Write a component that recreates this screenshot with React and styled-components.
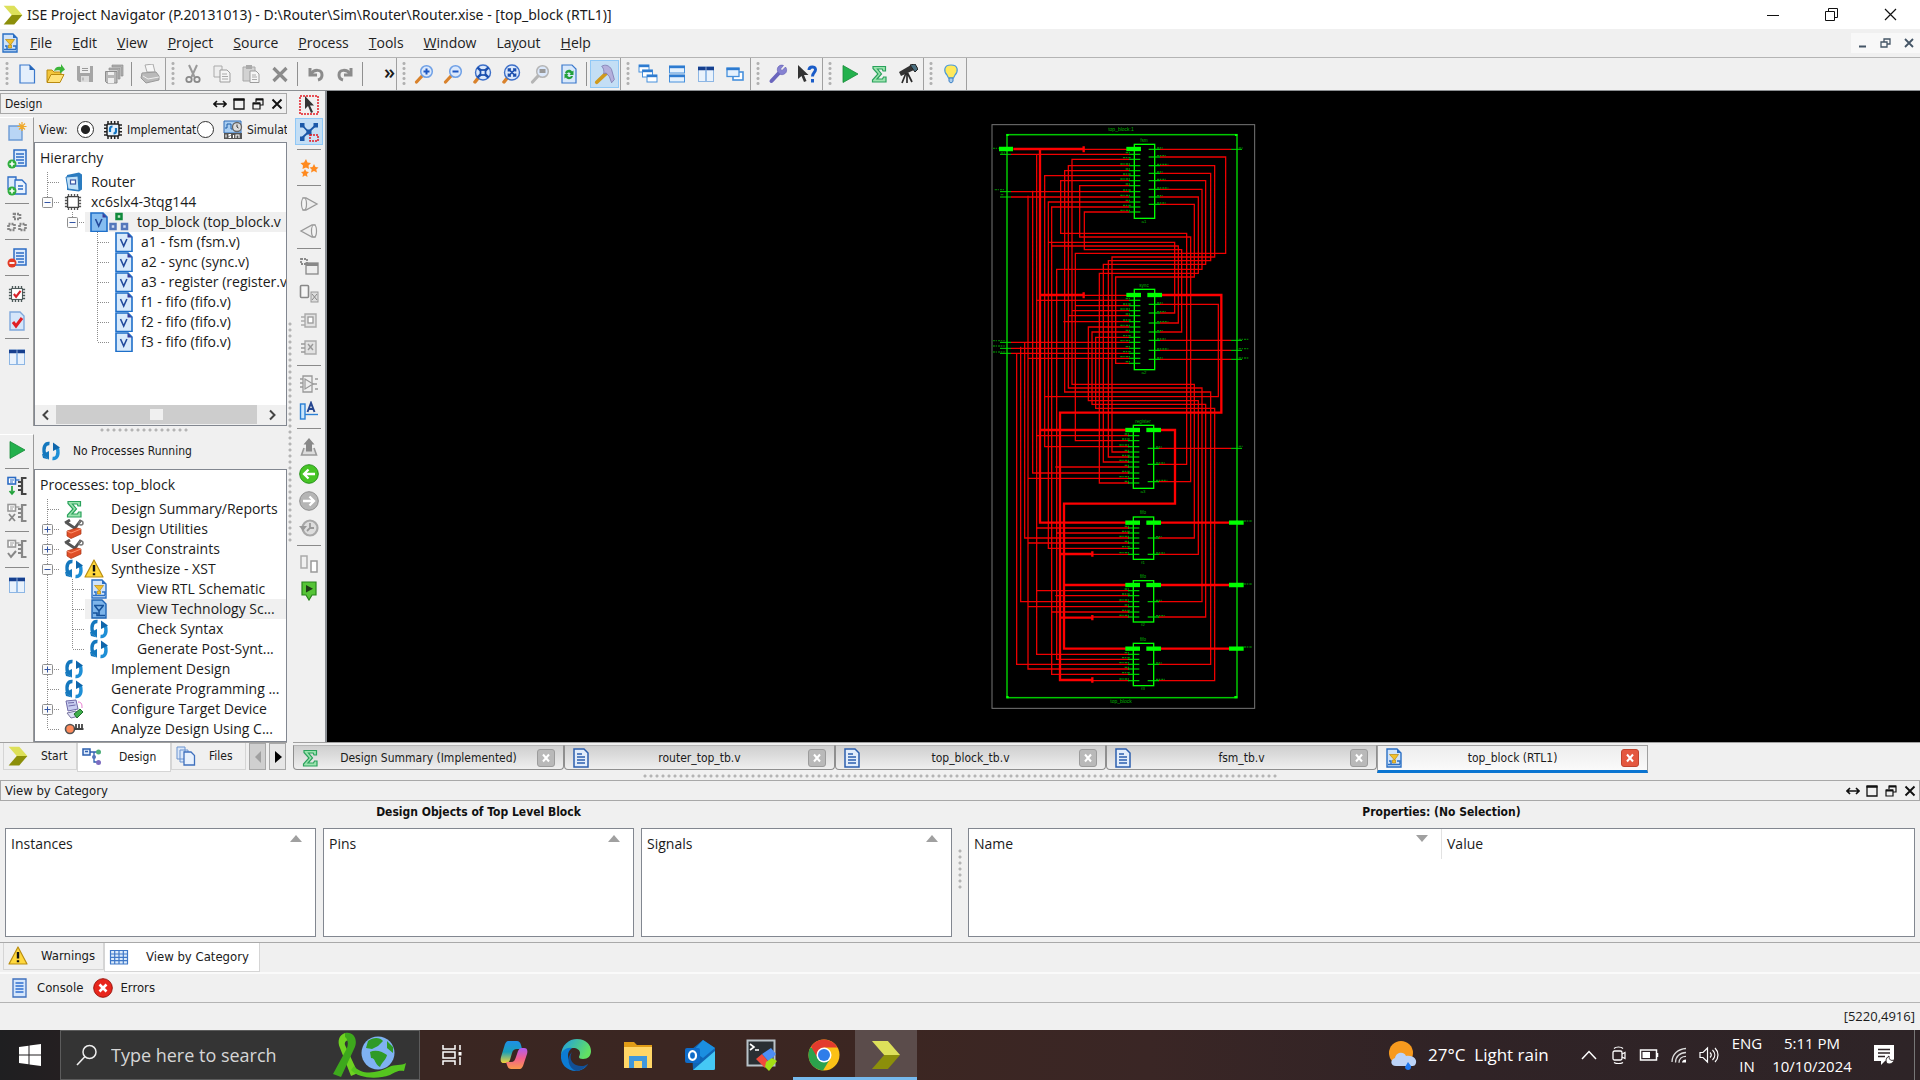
import React from "react";
import styled, { createGlobalStyle, css } from "styled-components";

const UI = `"Open Sans", "Noto Sans", sans-serif`;
const SMALL = `"DejaVu Sans Condensed", "DejaVu Sans", sans-serif`;

const GlobalStyle = createGlobalStyle`
  * { box-sizing: border-box; }
  body { margin: 0; background: #f0f0f0; color: #1b1b1b; font: 14px/20px ${UI}; }
  button { margin: 0; padding: 0; border: 0; background: none; color: inherit; font: inherit; }
  svg { display: block; flex: none; }
`;

/* ---------- icons ---------- */

const Svg = ({ s = 20, w, h, children, vb = "0 0 20 20" }) => (
  <svg width={w || s} height={h || s} viewBox={vb} fill="none" aria-hidden="true">{children}</svg>
);

const sheet = (fill, stroke) => <path d="M3 1h10l4 4v14H3z" fill={fill} stroke={stroke} strokeWidth="1.400" />;
const plus = <g><circle cx="5" cy="15" r="4.500" fill="#2fae3e" /><path d="M5 12.500v5M2.500 15h5" stroke="#fff" strokeWidth="1.600" /></g>;
const lens = (inner, c = "#6fa0e6", handle = "#d9822b") => (
  <g>
    <path d="M2.500 18l6-6.500" stroke={handle} strokeWidth="3.200" strokeLinecap="round" />
    <circle cx="12.500" cy="7.500" r="5.800" fill="#dbe8fb" stroke={c} strokeWidth="1.500" />
    {inner}
  </g>
);
const chipPins = (c) => <path d="M5 1v18M8.300 1v18M11.700 1v18M15 1v18M1 5h18M1 8.300h18M1 11.700h18M1 15h18" stroke={c} strokeWidth="1.500" />;
const expandArrows = (
  <path d="M9 4l7 7M16 4l-7 7M9 6.500V4h2.500M13.500 4H16v2.500M9 8.500V11h2.500M13.500 11H16V8.500" stroke="#1b4fae" strokeWidth="1.700" />
);
const flow = (c, dark) => (
  <g>
    <rect x="1" y="1.500" width="7.500" height="6.500" fill="#fff" stroke={c} strokeWidth="1.600" />
    <path d="M3 4h4M3 6h3" stroke={c} />
    <path d="M8.500 4h4" stroke={c} strokeWidth="1.300" />
    <path d="M19.500 2h-4.500v16h4.500M11 6h4M11 10h4M11 14h4" stroke={dark} strokeWidth="2.200" />
  </g>
);

const ICONS = {
  ise: <Svg vb="0 0 32 32"><path d="M1 1h17l13 15H14z" fill="#dde05a" /><path d="M14 16h17L18 31H1z" fill="#8c8f0a" /></Svg>,
  schem: <Svg>{sheet("#cfe3fb", "#2a6fc4")}<path d="M13 1v4h4" fill="#2a6fc4" /><path d="M5.500 6.500h9l-4 5.500zM8.500 12h3v3h-3z" fill="#f2c12e" stroke="#b98a10" strokeWidth=".7" /><path d="M4 16.500h12M13 13h3v3M5 13h2v3" stroke="#2a6fc4" strokeWidth="1.400" /></Svg>,
  schemSel: <Svg>{sheet("#7db4ea", "#1f64b4")}<path d="M5 6.500h10M6 7l4 5 4-5M4 14h4v2.500h8M10 12v5" stroke="#16529b" strokeWidth="1.600" /></Svg>,
  newf: <Svg><path d="M3 1h9.500l5 5v13H3z" fill="#e4effc" stroke="#3a78cc" strokeWidth="1.200" /><path d="M12.500 1v5h5" fill="#2463b6" /></Svg>,
  open: <Svg><path d="M1 18V6h5l2 2h7v3" fill="#f3c63b" stroke="#b98a10" /><path d="M1 18.500l4-8h13l-4 8z" fill="#ffe27a" stroke="#b98a10" /><path d="M8 7c1-4 4-5 7-4V0l4 5.500-5 4V6.500c-2-.5-4-.5-6 .5z" fill="#3bb53a" /></Svg>,
  save: <Svg><path d="M2 2h16v16H4l-2-2z" fill="#a5a5a5" /><path d="M5 2h10v7H5z" fill="#eee" /><path d="M6 12h8v6H6z" fill="#dcdcdc" /><path d="M7 4.500h6M7 6.500h6M8 13.500v3" stroke="#999" /></Svg>,
  saveall: <Svg><path d="M8 1h11v11h-2V3H8zM5 4h11v11h-2V6H5z" fill="#b0b0b0" stroke="#919191" strokeWidth=".7" /><path d="M1.500 7.500H13V19H3l-1.500-1.500z" fill="#b8b8b8" stroke="#8d8d8d" /><path d="M4 8h6v3H4zM4 14h6v5H4z" fill="#efefef" /></Svg>,
  print: <Svg><path d="M5 1l8-1 2 8H7z" fill="#f6f6f6" stroke="#aaa" /><path d="M2 9l14-1 3 4v4l-13 3-5-5z" fill="#bababa" stroke="#999" /><path d="M3 12l5 3 11-2" stroke="#eee" /></Svg>,
  cut: <Svg><path d="M6 1l5.500 12M14 1L8.500 13" stroke="#9a9a9a" strokeWidth="2" /><circle cx="6" cy="15.500" r="2.700" stroke="#8a8a8a" strokeWidth="1.800" /><circle cx="14" cy="15.500" r="2.700" stroke="#8a8a8a" strokeWidth="1.800" /></Svg>,
  copy: <Svg><path d="M2 2h8v11H2z" fill="#eee" stroke="#aaa" /><path d="M8 6h7l3 3v9H8z" fill="#f5f5f5" stroke="#9d9d9d" /><path d="M10 10h5M10 12.500h6M10 15h6" stroke="#aaa" /></Svg>,
  paste: <Svg><path d="M2 3h12v14H2z" fill="#d2d2d2" stroke="#a8a8a8" /><path d="M5 1h6v4H5z" fill="#aaa" /><path d="M9 7h6l3 3v8.500H9z" fill="#f5f5f5" stroke="#9d9d9d" /><path d="M11 11h4M11 13h5M11 15.500h5" stroke="#aaa" /></Svg>,
  del: <Svg><path d="M3.500 4l13 13M16.500 4l-13 13" stroke="#8b8b8b" strokeWidth="3.200" /></Svg>,
  undo: <Svg><path d="M4 4v7h7" stroke="#8b8b8b" strokeWidth="3" /><path d="M5 10c3-5 11-5 11 1 0 3-2 4.500-4 5" stroke="#8b8b8b" strokeWidth="3" /></Svg>,
  redo: <Svg><path d="M16 4v7H9" stroke="#8b8b8b" strokeWidth="3" /><path d="M15 10C12 5 4 5 4 11c0 3 2 4.500 4 5" stroke="#8b8b8b" strokeWidth="3" /></Svg>,
  zin: <Svg>{lens(<path d="M12.500 4.500v6M9.500 7.500h6" stroke="#1c57c2" strokeWidth="2" />)}</Svg>,
  zout: <Svg>{lens(<path d="M9.500 7.500h6" stroke="#1c57c2" strokeWidth="2" />)}</Svg>,
  zfit: <Svg><path d="M3 18l4-5" stroke="#d9822b" strokeWidth="3.500" strokeLinecap="round" /><circle cx="11" cy="8.500" r="7.500" fill="#dbe8fb" stroke="#3d6fc8" strokeWidth="1.400" /><path d="M5.500 3.500l11 10M16.500 3.500l-11 10" stroke="#1b4fae" strokeWidth="2.400" /><rect x="8.500" y="6" width="5" height="5" fill="#dbe8fb" stroke="#1b4fae" strokeWidth="1.700" /></Svg>,
  zbox: <Svg><path d="M3 18l4-5" stroke="#d9822b" strokeWidth="3.500" strokeLinecap="round" /><circle cx="11" cy="8.500" r="7.500" fill="#dbe8fb" stroke="#3d6fc8" strokeWidth="1.400" /><g transform="translate(-1.500 1)">{expandArrows}</g></Svg>,
  zsel: <Svg>{lens(<path d="M9.500 5h6v4h-6z" fill="#999" />, "#b5b5b5", "#b5b5b5")}</Svg>,
  refresh: <Svg><path d="M3 1h10l4 4v14H3z" fill="#d8e8fb" stroke="#3a78cc" strokeWidth="1.200" /><path d="M6 9c1-4 6-4 7-1.500l1.500-1V11h-4l1.200-1.300C10.500 8 8.500 8 8 10zM14 12c-1 4-6 4-7 1.500l-1.500 1V10h4l-1.200 1.800c1 1.500 3 1.500 3.700.2z" fill="#22a03a" /></Svg>,
  hammer: <Svg s={22} vb="0 0 20 20"><path d="M2.500 17.500l9-8.500" stroke="#d09a1d" strokeWidth="3.400" strokeLinecap="round" /><path d="M7 3c3-2 7-1 9 3l2.500 9-2.500 3-2-5.500-3-3.500-2 1c0-3 0-5-2-7z" fill="#b4b0dc" stroke="#7b77ad" strokeWidth=".7" /></Svg>,
  cascade: <Svg>{[[1, 1], [4.5, 6], [9, 11]].map(([x, y]) => <g key={x}><rect x={x} y={y} width="10" height="7" fill="#fff" stroke="#4690dc" /><path d={`M${x} ${y + 1}h10`} stroke="#2e7bd0" strokeWidth="2.400" /></g>)}</Svg>,
  tileh: <Svg>{[2, 11].map((y) => <g key={y}><rect x="2.500" y={y} width="15" height="7" fill="#e5f1fd" stroke="#4690dc" /><path d={`M2 ${y + 1}h16`} stroke="#2e7bd0" strokeWidth="2.400" /></g>)}</Svg>,
  tilev: <Svg><rect x="2.500" y="3" width="15" height="14.500" fill="#e9f2fc" stroke="#8db6e4" /><path d="M2 4.500h7.700M10.300 4.500H18" stroke="#163f8e" strokeWidth="3.600" /><path d="M10 6v11" stroke="#7aaae0" strokeWidth="1.500" /></Svg>,
  windows: <Svg><rect x="8" y="8" width="10" height="8" fill="#fff" stroke="#4690dc" strokeWidth="1.600" /><rect x="2" y="4" width="12" height="8.500" fill="#e5f1fd" stroke="#4690dc" strokeWidth="1.300" /><path d="M1.500 5h13" stroke="#2e7bd0" strokeWidth="2.400" /></Svg>,
  wrench: <Svg><path d="M3.500 17l7-7.500" stroke="#6b66bd" strokeWidth="4" strokeLinecap="round" /><path d="M17.500 3l-3.500 3.500-1.500-1.500L15.500 1.500C12 0 8.500 3 9.500 7s6 5 8.500 1.500c1-2 .8-4-.5-5.500z" fill="#8682d2" stroke="#5e5ab0" strokeWidth=".6" /></Svg>,
  help: <Svg><path d="M1 1v14l3.500-3 2.500 6 2.500-1-2.500-6h4.500z" fill="#333" /><path d="M12 6c0-4 6.500-4 6.500-.5 0 3-3 3-3 7M15.500 15v3.500" stroke="#1a5cc8" strokeWidth="3" /></Svg>,
  run: <Svg><path d="M3 1.500L18 10 3 18.500z" fill="#23b14d" stroke="#178a38" strokeWidth=".8" /></Svg>,
  sigma: <Svg><path d="M4 2.500h12.500V7H14l-.8-2H8.500l4 5-4.500 5h5.500l1-2H17v5H3.500v-2L9 10 4 4.500z" fill="#9be3ae" stroke="#2aa25c" strokeWidth="1.200" /></Svg>,
  scope: <Svg><path d="M1 8l12-7 3 5L3 12z" fill="#333" /><path d="M12 1l5-1 3 5-3 3z" fill="#4a6f80" stroke="#222" /><path d="M8 9L4 19M9 9v10M9.500 9l4.500 9" stroke="#2b2b2b" strokeWidth="1.700" /></Svg>,
  bulb: <Svg><path d="M10 1c-8 0-7 7-4 10l1.500 3h5L14 11c3-3 4-10-4-10z" fill="#ffe95c" stroke="#4b9ad8" strokeWidth="1.200" /><path d="M8 14h4v3.500L10 19l-2-1.500z" fill="#a9cdee" stroke="#3a7fc4" /></Svg>,
  newsrc: <Svg><path d="M2 4h13v14H2z" fill="#b9d5f5" stroke="#6c9ad4" strokeWidth="1.400" /><path d="M15 0v9M10.500 4.500h9M12 1.500l6 6M18 1.500l-6 6" stroke="#f0a92a" strokeWidth="1.200" /></Svg>,
  addsrc: <Svg><path d="M7 1h12v16H7z" fill="#dcebfc" stroke="#2c6cc4" strokeWidth="1.500" /><path d="M9 5h8M9 8h8M9 11h8M11 14h6" stroke="#2c6cc4" strokeWidth="1.300" />{plus}</Svg>,
  addcopy: <Svg><path d="M1 1h8v12H1z" fill="#dcebfc" stroke="#2c6cc4" strokeWidth="1.300" /><path d="M8 4h7l4 4v10H8z" fill="#eaf3fe" stroke="#2c6cc4" strokeWidth="1.300" /><path d="M11 10h5M11 13h5" stroke="#2c6cc4" strokeWidth="1.500" />{plus}</Svg>,
  hier: <Svg><g stroke="#858585" strokeWidth="2.600" strokeDasharray="2 1"><rect x="7" y="2" width="6" height="5" /><rect x="1.500" y="12" width="6" height="6" /><rect x="12.500" y="12" width="6" height="6" /></g></Svg>,
  remove: <Svg><path d="M7 1h12v16H7z" fill="#dcebfc" stroke="#2c6cc4" strokeWidth="1.500" /><path d="M9 5h8M9 8h8M9 11h8M11 14h6" stroke="#2c6cc4" strokeWidth="1.300" /><circle cx="5" cy="15" r="4.500" fill="#e23a25" /><path d="M2.500 15h5" stroke="#fff" strokeWidth="1.800" /></Svg>,
  chipcheck: <Svg s={18}>{chipPins("#4d5a5a")}<rect x="4" y="4" width="12" height="12" fill="#fff" stroke="#3d4a4a" /><path d="M6.500 10l2.500 3 5-6.500" stroke="#d8232a" strokeWidth="2.400" /></Svg>,
  filecheck: <Svg>{sheet("#d5e6fa", "#7fa8dc")}<path d="M6 11l3 4 6-8" stroke="#e01f26" strokeWidth="3" /></Svg>,
  flowblue: <Svg>{flow("#2c6cc4", "#444")}<path d="M5 10v8M2.500 15L5 18l2.500-3" stroke="#23a33c" strokeWidth="1.700" /></Svg>,
  flowx: <Svg>{flow("#999", "#888")}<path d="M2 11l6 7M8 11l-6 7" stroke="#888" strokeWidth="1.800" /></Svg>,
  flowchk: <Svg>{flow("#999", "#888")}<path d="M1 14l3 4 5-6" stroke="#888" strokeWidth="2" /></Svg>,
  folder: <Svg><path d="M3 3l12-2.500 3 2v15l-3 2L3 18z" fill="#2b7cc0" /><path d="M2 5l12-1 1 14.500L4 17z" fill="#bfe0f8" stroke="#2a78bd" /><rect x="6.500" y="8" width="5" height="4" fill="#fff" stroke="#3a56a5" strokeWidth="1.200" /></Svg>,
  chip: <Svg s={18}>{chipPins("#555")}<path d="M4 4h12v12H4z" fill="#fff" stroke="#444" strokeWidth="1.400" /></Svg>,
  chipblue: <Svg>{chipPins("#222")}<rect x="4" y="4" width="12" height="12" rx="1.500" fill="#e3f1fc" stroke="#222" strokeWidth="1.500" /><path d="M7 12V9c0-2 1-2.500 2.500-2.500M13 8v3c0 2-1 2.500-2.500 2.500" stroke="#1477c4" strokeWidth="2.200" /></Svg>,
  isim: <Svg><path d="M1 1h17v12H1z" fill="#a8cdf1" stroke="#2f6db8" /><path d="M2 8h2V4h4v5h3" stroke="#1f5ea8" /><circle cx="14" cy="7" r="4.500" fill="#ddd" stroke="#666" strokeWidth="1.300" /><path d="M14 4.500V7l1.500 1" stroke="#333" /><path d="M1 13h18v6H1z" fill="#555" /><path d="M3 14.500v3M5.500 17.500h2v-1.500h-1.500v-1.500h2M10.500 15v3M13 18v-3h3v3" stroke="#fff" strokeWidth="1.100" /></Svg>,
  vfile: <Svg><path d="M2 1h12l4 4v14.500H2z" fill="#d9eafb" stroke="#1e6fc9" strokeWidth="1.600" /><path d="M13.500 1v4.500H18" fill="#3a3f9a" /><path d="M6.500 7l3.200 7 3.200-7" stroke="#234a9c" strokeWidth="1.600" /></Svg>,
  vfileSel: <Svg><path d="M2 1h12l4 4v14.500H2z" fill="#86bdf0" stroke="#1e6fc9" strokeWidth="1.600" /><path d="M13.500 1v4.500H18" fill="#3a3f9a" /><path d="M6.500 7l3.200 7 3.200-7" stroke="#234a9c" strokeWidth="1.600" /></Svg>,
  tree3: <Svg><rect x="7.500" y="2" width="5" height="5" fill="#bfe8c7" stroke="#118a3c" strokeWidth="2.500" /><rect x="1.500" y="12" width="5" height="5" fill="#cfdcf5" stroke="#5577bb" strokeWidth="2.500" /><rect x="13" y="12" width="5" height="5" fill="#cfdcf5" stroke="#5577bb" strokeWidth="2.500" /></Svg>,
  cycle: <Svg><path d="M8.500 2.500C4 2 2 6 3.500 13" stroke="#1478be" strokeWidth="3.400" /><path d="M1 13.500l7-3.500v8.500z" fill="#1478be" /><path d="M1 13l7 5.500L2 17z" fill="#1478be" /><path d="M11.500 17.500c4.500.5 6.500-3.500 5-10.500" stroke="#1e8fd6" strokeWidth="3.400" /><path d="M19 6.500L12 10V1.500z" fill="#0f66ab" /></Svg>,
  tools: <Svg><path d="M3 4l9 6M1 4l5-3M17 1l-6 8" stroke="#555" strokeWidth="2.800" /><circle cx="17" cy="4" r="2" stroke="#777" strokeWidth="1.500" /><path d="M3 12l10-3 4 1v5L7 19.500 3 17z" fill="#df4f28" stroke="#a73516" strokeWidth=".7" /><path d="M3 12l4 2 10-4" stroke="#ff9470" /></Svg>,
  warn: <Svg><path d="M10 1l9 17H1z" fill="#ffd83d" stroke="#b98d10" strokeWidth="1.200" strokeLinejoin="round" /><path d="M10 6v6.500M10 14.300v2" stroke="#111" strokeWidth="2.400" /></Svg>,
  device: <Svg><path d="M2 2l10-1 2 9-10 2z" fill="#c8cdf0" stroke="#6f6aa8" /><path d="M4 4l6-.5M4.500 7l7-1" stroke="#6f6aa8" /><path d="M3 14l9-2 3 5-8 2z" fill="#dcdff4" stroke="#77739f" /><path d="M10 15l6-5 3 3-6 6z" fill="#3fae4b" stroke="#1f6e2c" /><path d="M14 3c4 0 4 3 4 6" stroke="#e87ad0" /></Svg>,
  analyze: <Svg><circle cx="6" cy="10" r="4.500" fill="#ff8a5a" stroke="#555" strokeWidth="1.600" /><path d="M10 10h9.500M12 5v5M15 5v5M18 5v5" stroke="#444" strokeWidth="1.800" /></Svg>,
  pointer: <Svg><rect x="1" y="1" width="18" height="18" stroke="#e31b23" strokeWidth="1.500" strokeDasharray="2 1" /><path d="M6 1v13l3-3 3 7 2-1-3-6.500h4z" fill="#333" /></Svg>,
  pan: <Svg><path d="M3 3l11 12M17 3L3 16" stroke="#1b58a8" strokeWidth="1.800" /><path d="M1 1h4.500v4.500H1zM14.500 1H19v4.500h-4.500zM1 14.500h4.500V19H1zM7.500 7.500h5v5h-5z" fill="#1b58a8" /><rect x="11" y="13" width="8" height="6" fill="#cde3f6" stroke="#e31b23" strokeWidth="1.500" strokeDasharray="2 1" /></Svg>,
  stars: <Svg><path d="M7 1l1.500 3.500L12 5 9.500 7.500l.5 3.500-3-1.500L3.500 11l.5-3.500L1.500 5 5 4.500zM15 6l1.500 3 3 .5-2.200 2 .7 3-3-1.500-3 1.500.7-3-2.200-2 3-.5zM6 11l1.300 2.500 2.700.5-2 2 .5 3L6 17.500 3.500 19l.5-3-2-2 2.700-.5z" fill="#ff8a1f" /></Svg>,
  coneR: <Svg><path d="M4 4h3l11 6-11 6H4z" fill="#eee" stroke="#999" strokeWidth="1.300" /><ellipse cx="5" cy="10" rx="2.500" ry="6" fill="#f4f4f4" stroke="#999" strokeWidth="1.200" /></Svg>,
  coneL: <Svg><path d="M16 4h-3L2 10l11 6h3z" fill="#eee" stroke="#999" strokeWidth="1.300" /><ellipse cx="15" cy="10" rx="2.500" ry="6" fill="#f4f4f4" stroke="#999" strokeWidth="1.200" /></Svg>,
  push: <Svg><rect x="7" y="6" width="12" height="11" fill="#eee" stroke="#888" strokeWidth="1.300" /><path d="M7 7.500h12" stroke="#888" strokeWidth="3" /><rect x="2" y="2" width="6" height="5" stroke="#888" strokeWidth="1.800" strokeDasharray="2 1" /></Svg>,
  pop: <Svg><rect x="1.500" y="1.500" width="8" height="12" rx="1" fill="#f5f5f5" stroke="#888" strokeWidth="1.600" /><rect x="12" y="8" width="7" height="10" fill="#ddd" stroke="#999" /><path d="M13 10l5 6M18 10l-5 6" stroke="#888" /></Svg>,
  mod1: <Svg><path d="M6 3h11v13H6z" fill="#e2e2e2" stroke="#aaa" strokeWidth="1.400" /><path d="M2 6h4M2 10h4M2 14h4" stroke="#aaa" strokeWidth="1.500" /><rect x="9" y="6" width="5" height="6" fill="#fff" stroke="#999" strokeWidth="1.300" /></Svg>,
  modx: <Svg><path d="M6 3h11v13H6z" fill="#e2e2e2" stroke="#aaa" strokeWidth="1.400" /><path d="M2 6h4M2 10h4M2 14h4M9 6l5 6M14 6l-5 6" stroke="#999" strokeWidth="1.400" /></Svg>,
  modtri: <Svg><path d="M4 2h9v16H4zM1 5h3M1 9h3M1 13h3M13 10h5M16 5h3M16 15h3" stroke="#999" strokeWidth="1.300" /><path d="M6 5l8 5-8 5z" fill="#eee" stroke="#999" strokeWidth="1.200" /></Svg>,
  label: <Svg><rect x="1.500" y="3" width="4.500" height="15" fill="#cbe6fb" stroke="#2a7fd4" strokeWidth="1.400" /><path d="M6 13.500h13" stroke="#2a7fd4" strokeWidth="1.400" /><path d="M8.500 11l3.500-9 3.500 9M10 8h4" stroke="#26468f" strokeWidth="2" /></Svg>,
  up: <Svg><path d="M5 11l-2.500 7h15L15 11" fill="#ddd" stroke="#999" strokeWidth="1.600" /><path d="M10 1l5.500 6.500H13v7H7v-7H4.500z" fill="#888" /></Svg>,
  back: <Svg><circle cx="10" cy="10" r="9.300" fill="#46c425" stroke="#26931a" /><path d="M16 10H5M9.500 5.500L5 10l4.500 4.500" stroke="#fff" strokeWidth="2.300" /></Svg>,
  fwd: <Svg><circle cx="10" cy="10" r="9.300" fill="#b5b5b5" stroke="#8d8d8d" /><path d="M4 10h11M10.500 5.500L15 10l-4.500 4.500" stroke="#fff" strokeWidth="2.300" /></Svg>,
  hist: <Svg><circle cx="11" cy="10" r="7.500" fill="#ddd" stroke="#a8a8a8" strokeWidth="2.200" /><path d="M0 8l4 5 4-5z" fill="#999" /><path d="M11 5v5l-3 3M11 10h4" stroke="#999" strokeWidth="1.800" /></Svg>,
  twobox: <Svg><rect x="2" y="2" width="6" height="12" fill="#f0f0f0" stroke="#aaa" strokeWidth="1.500" /><rect x="12" y="7" width="6" height="11" fill="#fff" stroke="#999" strokeWidth="1.500" /></Svg>,
  pin: <Svg><path d="M3 1h14v13h-4l-3 5-3-5H3z" fill="#55c436" stroke="#27841a" strokeWidth="1.200" /><path d="M7 4l7 3.800L7 11.500z" fill="#1d3a16" /></Svg>,
  design: <Svg><rect x="1" y="2" width="7" height="6" fill="#dce8fa" stroke="#2c5fae" strokeWidth="1.500" /><path d="M8 5h4v10h4M12 5h3M3 4.500h3" stroke="#2c5fae" strokeWidth="1.300" /><circle cx="16.500" cy="5" r="2.500" fill="#4fae7a" /><circle cx="12" cy="10" r="2" fill="#5577bb" /><circle cx="16.500" cy="15.500" r="2.500" fill="#7d6cc0" /></Svg>,
  files: <Svg><path d="M1 1h8v12H1zM4 4h8v12H4z" fill="#dbe8fa" stroke="#6b93cf" /><path d="M8 6h7l3.500 3.500V19H8z" fill="#e8f1fd" stroke="#3f70bd" strokeWidth="1.300" /></Svg>,
  doc: <Svg><path d="M3 1h10l4 4v14H3z" fill="#e2edfb" stroke="#2c5fae" strokeWidth="1.500" /><path d="M6 6h5M6 9h8M6 12h8M6 15h8" stroke="#2c5fae" strokeWidth="1.500" /></Svg>,
  grid: <Svg><path d="M1.500 3.500h17v13.500h-17z" fill="#dcebfb" /><path d="M1 3.500h18M1 7h18M1 10.300h18M1 13.600h18M1 17h18M1.500 3v14M5.700 3v14M10 3v14M14.300 3v14M18.500 3v14" stroke="#3f78c8" strokeWidth="1.200" /></Svg>,
  console: <Svg><path d="M3 1h13v18H3z" fill="#d5e6fb" stroke="#3f70bd" strokeWidth="1.300" /><path d="M5.500 5h8M5.500 8h8M5.500 11h8M5.500 14h8" stroke="#2f6fd0" strokeWidth="1.700" /></Svg>,
  error: <Svg><circle cx="10" cy="10" r="9.300" fill="#e8261c" stroke="#9c1710" /><path d="M6.500 6.500l7 7M13.500 6.500l-7 7" stroke="#fff" strokeWidth="2.600" /></Svg>,
};

/* dock caption glyphs */
const CAPS = {
  float: <Svg s={14} vb="0 0 14 14"><path d="M1 7h12M4 4L1 7l3 3M10 4l3 3-3 3" stroke="#111" strokeWidth="1.600" /></Svg>,
  max: <Svg s={14} vb="0 0 14 14"><path d="M2 2.500h10v9.500H2z" stroke="#111" strokeWidth="1.300" /><path d="M1.500 2.500h11" stroke="#111" strokeWidth="2.400" /></Svg>,
  restore: <Svg s={14} vb="0 0 14 14"><path d="M5 5V2h7v6H9M2 6h7v6H2z" stroke="#111" strokeWidth="1.200" /><path d="M5 2.500h7M2 6.500h7" stroke="#111" strokeWidth="2" /></Svg>,
  close: <Svg s={14} vb="0 0 14 14"><path d="M2.500 2.500l9 9M11.500 2.500l-9 9" stroke="#111" strokeWidth="1.900" /></Svg>,
};

/* ---------- frame ---------- */

const Frame = styled.div`display: flex; flex-direction: column; min-height: 100vh; overflow: hidden;`;
const TitleBar = styled.header`
  display: flex; align-items: center; height: 29px; padding-left: 3px; gap: 4px; background: #fff;
  font-family: "Noto Sans", sans-serif;
`;
const Spacer = styled.div`flex: 1;`;
const WinButtons = styled.div`display: flex;`;
const WinButton = styled.button`display: grid; place-items: center; width: 59px; height: 29px;`;
const MenuBar = styled.nav`display: flex; align-items: center; height: 28px; padding-right: 0;`;
const MenuButton = styled.button`
  padding: 0 10px; height: 26px; color: #222;
  &::first-letter { text-decoration: ${(p) => (p.$plain ? "none" : "underline")}; }
`;
const MdiButton = styled.button`display: grid; place-items: center; width: 23px; height: 20px; background: #f8f8f8;`;

const ToolBar = styled.div`
  display: flex; height: 34px; border-top: 1px solid #b4b4b4; border-bottom: 1px solid #8c8f92;
`;
const ToolGroup = styled.div`
  display: flex; align-items: center; padding: 0 1px 0 5px;
  border-right: 1px solid #a0a0a0;
`;
const Grip = styled.span`
  width: 4px; height: 26px; margin-right: 3px;
  background: radial-gradient(circle, #b0b0b0 1px, transparent 2px) 0 0 / 4px 5px;
`;
const Tool = styled.button`
  display: grid; place-items: center; width: 28px; height: 28px; border: 1px solid transparent;
  ${(p) => p.$on && css`background: #c3def5; border-color: #90c8f6;`}
`;
const TopTool = styled(Tool)`width: 29px;`;
const VRule = styled.span`width: 1px; height: 24px; margin: 0 3px; background: #909090;`;
const More = styled.span`width: 29px; padding-bottom: 4px; text-align: right; font-size: 20px; font-weight: 600;`;

const Workspace = styled.div`display: flex; flex: 1; min-height: 0;`;
const DockPanel = styled.aside`display: flex; flex-direction: column; width: 287px; min-height: 0;`;
const Caption = styled.div`
  display: flex; align-items: center; height: 21px; margin: ${(p) => p.$m || "0"}; padding-left: 4px;
  border: 1px solid #a8a8a8; font: ${(p) => p.$size}px/18px ${SMALL}; background: #f0f0f0;
`;
const CapButton = styled.button`display: grid; place-items: center; width: 19px; height: 18px;`;
const Dock = styled.section`display: flex; min-height: 0; flex: 1 1 0;`;
const SideBar = styled.div`
  display: flex; flex-direction: column; align-items: center; width: 34px; padding: ${(p) => p.$pad};
  border-right: 1px solid #9a9a9a; border-top: 1px solid #fff;
`;
const SideTool = styled(Tool)`height: 27px;`;
const HRule = styled.span`height: 1px; width: 24px; margin: 4px 0; background: #8a8a8a; flex: none;`;
const DockBody = styled.div`display: flex; flex-direction: column; flex: 1; min-width: 0;`;
const ViewRow = styled.div`
  display: flex; align-items: center; height: 25px; padding-left: 5px; overflow: hidden; white-space: nowrap;
  font: 12px/16px ${SMALL};
`;
const ViewLabel = styled.span`width: 38px; flex: none;`;
const Choice = styled.label`display: flex; align-items: center; gap: 4px; width: ${(p) => p.$w}px; flex: none;`;
const Radio = styled.input`
  appearance: none; flex: none; width: 17px; height: 17px; margin: 0 5px 0 0; border: 1px solid #333; border-radius: 50%; background: #fff;
  &:checked { background: radial-gradient(circle, #222 4px, #fff 5px); }
`;
const TreeBox = styled.div`
  display: flex; flex-direction: column; flex: 1; min-height: 0; overflow: hidden;
  border: 1px solid #828790; background: #fff;
`;
const TreeHead = styled.div`padding: 5px 0 4px 5px;`;
const Row = styled.div`display: flex; align-items: center; height: 20px; white-space: nowrap;`;
const RowBody = styled.div`
  display: flex; align-items: center; flex: 1; height: 20px; min-width: 0;
  background: ${(p) => (p.$sel ? "#f0f0f0" : "transparent")};
`;
const IconSlot = styled.span`display: flex; align-items: center; flex: none; width: ${(p) => p.$w}px; padding-left: 4px;`;
const RowText = styled.span`padding-left: 1px;`;
const ScrollRow = styled.div`display: flex; align-items: center; height: 20px; margin-top: auto; background: #f0f0f0;`;
const ScrollArrow = styled.button`display: grid; place-items: center; width: ${(p) => p.$w}px; height: 19px;`;
const Track = styled.div`display: grid; place-items: center; flex: 1; height: 19px; background: #cdcdcd;`;
const Thumb = styled.span`width: 13px; height: 11px; background: #f0f0f0;`;
const DotsH = styled.div`
  height: 8px; width: ${(p) => p.$w}; margin: 0 auto; flex: none;
  background: radial-gradient(circle, #b4b4b4 1px, transparent 2px) 0 1px / 6px 6px repeat-x;
`;
const DotsV = styled.div`
  width: ${(p) => p.$w}; display: grid; place-items: center; flex: none;
  &::before { content: ""; width: 4px; height: ${(p) => p.$h}; background: radial-gradient(circle, #b4b4b4 1px, transparent 2px) 0 0 / 4px 6px; }
`;
const Running = styled.div`
  display: flex; align-items: center; gap: 12px; height: 35px; padding-left: 7px; font: 12px/16px ${SMALL};
`;

const DockTabs = styled.div`
  display: flex; align-items: flex-start; height: 30px; padding-left: 3px; border-top: 1px solid #a0a0a0;
  font: 12px/16px ${SMALL};
`;
const DockTab = styled.button`
  display: flex; align-items: center; gap: ${(p) => (p.$on ? 17 : 13)}px; width: ${(p) => p.$w}px; height: ${(p) => (p.$on ? 29 : 27)}px;
  padding: 0 0 0 4px; white-space: nowrap;
  border: 1px solid #d5d5d5; border-top: 0; background: ${(p) => (p.$on ? "#fff" : "#f0f0f0")};
`;
const TabArrow = styled.button`
  display: grid; place-items: center; width: 17px; height: 27px; margin-left: 3px; border: 1px solid #a8a8a8;
  background: ${(p) => (p.$off ? "#cfcfcf" : "#e6e6e6")};
`;

const ToolColumn = styled.div`
  display: flex; flex-direction: column; align-items: center; width: 34px;
  border-right: 2px solid #8b8f94;
`;
const EditorArea = styled.div`display: flex; flex-direction: column; flex: 1; min-width: 0;`;
const EditorRow = styled.div`display: flex; flex: 1; min-height: 0;`;
const Canvas = styled.main`display: flex; align-items: center; justify-content: center; flex: 1; background: #000;`;

const EditorTabs = styled.div`display: flex; align-items: flex-start; height: 30px; border-top: 1px solid #a0a0a0; padding-top: 2px;`;
const EditorTab = styled.div`
  display: flex; align-items: center; flex: 0 1 271px; height: ${(p) => (p.$on ? 28 : 25)}px; padding: 0 8px 0 6px;
  border: 1px solid #8f8f8f; border-top-color: #b5b5b5; border-radius: 0 0 4px 4px;
  background: linear-gradient(#cfcfcf, #efefef); font: 12px/16px ${SMALL};
  ${(p) => p.$on && css`background: linear-gradient(#ededed, #fafafa); border-radius: 0; border-color: #a0a0a0; border-bottom: 3px solid #0a74d1;`}
`;
const TabName = styled.button`flex: 1; text-align: center; white-space: nowrap;`;
const TabClose = styled.button`
  display: grid; place-items: center; width: 18px; height: 18px; border: 1px solid; border-radius: 3px;
  background: ${(p) => (p.$on ? "#e4583f" : "#b9b9b9")}; border-color: ${(p) => (p.$on ? "#c0442e" : "#9c9c9c")};
`;

const CategoryPanel = styled.section`display: flex; padding: 0 5px;`;
const Half = styled.div`display: flex; flex-direction: column; flex: 1; min-width: 0;`;
const HalfTitle = styled.h2`margin: 0; padding: 3px 0 8px; font: bold 12px/16px ${SMALL}; text-align: center; color: #111;`;
const Lists = styled.div`display: flex; gap: 7px;`;
const ListTable = styled.table`
  display: block; flex: 1; height: 109px; border: 1px solid #828790; background: #fff;
  thead, tr { display: flex; width: 100%; }
`;
const HeadCell = styled.th`
  display: flex; flex: 1; justify-content: space-between; padding: 5px 13px 0 5px; height: 30px; font-weight: normal; text-align: left;
  & + & { border-left: 1px solid #e2e2e2; }
`;
const BottomTabs = styled.div`
  display: flex; align-items: flex-start; height: 30px; margin-top: 5px; padding-left: 3px;
  border-top: 1px solid #a9a9a9; font: 13px/16px ${SMALL};
`;
const ConsoleBar = styled.div`
  display: flex; align-items: center; gap: 10px; height: 31px; padding-left: 10px;
  border-top: 2px solid #fafafa; border-bottom: 1px solid #b4b4b4;
`;
const ConsoleTab = styled.button`display: flex; align-items: center; gap: 7px; font: 13px/16px ${SMALL};`;
const StatusBar = styled.footer`height: 27px; padding: 3px 5px 0; text-align: right; font-size: 13px;`;

/* ---------- taskbar ---------- */

const TaskBar = styled.div`
  display: flex; height: 50px; color: #fff;
  background: linear-gradient(90deg, #1f1f21 0, #241f21 60px, #3a2622 420px, #3c2622 900px, #3a2625 1150px, #302326 1450px, #2e2427 100%);
`;
const StartButton = styled.button`display: grid; place-items: center; width: 60px; height: 50px;`;
const Search = styled.label`
  display: flex; align-items: center; width: 360px; margin-right: 1px; padding: 0 11px 0 15px; gap: 13px;
  border: 1px solid #5c5c5c; background: #343434;
`;
const SearchInput = styled.input`
  flex: 1; min-width: 0; padding: 0; border: 0; background: none; color: #ddd; font: 18px/24px ${UI};
  &::placeholder { color: #d6d6d6; opacity: 1; }
`;
const AppButton = styled.button`
  display: grid; place-items: center; width: 62px; height: 50px; border-bottom: 3px solid ${(p) => (p.$run ? "#76b9ed" : "transparent")};
  padding-top: 3px; background: ${(p) => (p.$on ? "#5b4c4b" : "none")}; background-clip: padding-box;
`;
const Tray = styled.div`display: flex; align-items: center; font-size: 17px; padding-right: 5px;`;
const Weather = styled.button`display: flex; align-items: center; width: 186px; gap: 10px; white-space: pre; text-align: left;`;
const TrayButton = styled.button`display: grid; place-items: center; width: 30px; height: 50px;`;
const TrayText = styled.button`width: ${(p) => p.$w}px; font-size: 15px; line-height: 23px; text-align: center;`;
const NoticeButton = styled(TrayButton)`width: 50px; padding-left: 10px;`;
const Desktop = styled.button`width: 1px; height: 50px; margin-left: 10px; background: #777;`;

/* ---------- schematic drawing ---------- */

const THIN = [
  "M310 118H447M93 133H447M170 134V1633H447M168 571H447M168 977H447M168 1254H447M168 1442H447",
  "M447 148H276V823H643V1284H535M276 602H447",
  "M447 167H265V834H666V1475H535M265 617H447",
  "M447 182H254V846H692V1663H535M250 635H447",
  "M447 197H194V1010H447M194 860H715V583H540",
  "M447 212H242V370H620V1063H535",
  "M447 227H299V381H632V1115H535",
  "M93 245H447M158 242V1089H447",
  "M93 261H447M144 257V1677H447M144 1105H447M144 1299H447M144 1490H447M144 745H447",
  "M447 276H205V1315H447M205 397H584V609H540",
  "M447 291H215V1693H447M215 1506H447M215 408H595V639H540",
  "M447 306H313V419H605V666H540",
  "M540 118H753M540 141H737V430H286V992H447M286 587H447",
  "M540 167H704V441H396V1026H447",
  "M540 190H692V452H385V1041H447",
  "M540 212H677V463H370V1056H447",
  "M540 238H666V478H230V1648H447M226 1071H447M230 1269H447M226 1457H447",
  "M540 261H655V490H358V1119H447",
  "M540 283H643V501H407V760H447",
  "M447 651H325V872H655V1333H535",
  "M447 666H336V883H677V1521H535",
  "M447 682H347V895H704V1712H535",
  "M93 697H447M134 697V1284H447M93 715H447M122 710V1475H447M93 730H447M110 730V1663H447",
  "M540 691H753M540 721H753M540 748H753M310 556H447M535 1015H753",
  "M337 1333H447M337 1521H447M337 1712H447",
];
const THICK = [
  "M100 117H311M180 117V1238H440M180 555H311M180 960H440",
  "M540 555H724V908H240V1710H337M240 1332H337M240 1523H337",
  "M535 960H585V1181H252V1616H440M252 1425H440",
  "M535 1238H750M535 1425H750M535 1616H750",
];
const BLOCKS = [
  { x: 463, y: 103, h: 222, top: "fsm", name: "a1", bus: [117], busR: [], l: [133, 148, 167, 182, 197, 212, 227, 245, 261, 276, 291, 306], r: [118, 141, 167, 190, 212, 238, 261, 283] },
  { x: 463, y: 538, h: 241, top: "sync", name: "a2", bus: [555], busR: [555], l: [571, 587, 602, 617, 635, 651, 666, 682, 697, 715, 730, 745, 760], r: [583, 609, 639, 666, 691, 721, 748] },
  { x: 460, y: 946, h: 189, top: "register", name: "a3", bus: [960], busR: [960], l: [977, 992, 1010, 1026, 1041, 1056, 1071, 1089, 1105, 1119], r: [1015, 1063, 1115] },
  { x: 460, y: 1221, h: 127, top: "fifo", name: "f1", bus: [1238], busR: [1238], l: [1254, 1269, 1284, 1299, 1315, 1333], r: [1284, 1333] },
  { x: 460, y: 1412, h: 124, top: "fifo", name: "f2", bus: [1425], busR: [1425], l: [1442, 1457, 1475, 1490, 1506, 1521], r: [1475, 1521] },
  { x: 460, y: 1600, h: 127, top: "fifo", name: "f3", bus: [1616], busR: [1616], l: [1633, 1648, 1663, 1677, 1693, 1712], r: [1663, 1712] },
];
const Schematic = () => (
  <svg width="265" height="586" viewBox="33 42 795 1758" fill="none" role="img" aria-label="top_block schematic">
    <rect x="36" y="44" width="788" height="1751" stroke="#777" strokeWidth="3" />
    <path d={THIN.join("")} stroke="#f00000" strokeWidth="3.800" />
    <path d={THICK.join("")} stroke="#f00" strokeWidth="7" />
    <path d="M311 109v18M311 547v18M337 1324v16M337 1515v16M337 1702v16" stroke="#f00" strokeWidth="7" />
    <rect x="81" y="74" width="690" height="1689" stroke="#00c800" strokeWidth="4.500" />
    <path d="M79 72h7v6h-7zM765 72h7v6h-7zM79 1758h7v7h-7zM763 1758h9v7h-9z" fill="#0f0" />
    {BLOCKS.map((b) => (
      <g key={b.name}>
        <rect x={b.x} y={b.y} width="61" height={b.h} stroke="#0f0" strokeWidth="4" />
        {b.l.map((y) => <path key={y} d={`M${b.x - 16} ${y}h34`} stroke="#00dc00" strokeWidth="3.500" />)}
        {b.r.map((y) => <path key={y} d={`M${b.x + 43} ${y}h34`} stroke="#00dc00" strokeWidth="3.500" />)}
        {b.l.map((y, i) => <path key={y} d={`M${b.x - 14 - (i % 3) * 8 - 12} ${y - 5}H${b.x - 11}`} stroke="#008a00" strokeWidth="4" strokeDasharray="7 2 4 3" />)}
        {b.r.map((y, i) => <path key={y} d={`M${b.x + 68} ${y - 4}h${18 + (i % 3) * 8}`} stroke="#008a00" strokeWidth="4" strokeDasharray="6 2 5 3" />)}
        {b.bus.map((y) => <path key={y} d={`M${b.x - 24} ${y}h44`} stroke="#0f0" strokeWidth="13" />)}
        {b.busR.map((y) => <path key={y} d={`M${b.x + 39} ${y}h44`} stroke="#0f0" strokeWidth="13" />)}
        <text x={b.x + 29} y={b.y - 8} textAnchor="middle" fontSize="14" fontFamily="Liberation Sans" fill="#00b400">{b.top}</text>
        <text x={b.x + 29} y={b.y + b.h + 13} textAnchor="middle" fontSize="13" fontFamily="Liberation Sans" fill="#00b400">{b.name}</text>
      </g>
    ))}
    <path d="M57 117h42M747 1238h44M747 1425h44M747 1616h44" stroke="#0f0" strokeWidth="13" />
    <path d="M60 133h33M60 245h33M60 261h33M60 697h33M60 715h33M60 730h33M753 118h33M753 691h33M753 721h33M753 748h33M753 1015h33" stroke="#00dc00" strokeWidth="3" />
    <path d="M38 115h18M62 129h16M44 239h28M62 254h10M38 692h36M38 708h36M38 726h36M776 114h12M776 688h30M776 716h30M776 744h30M776 1009h12M792 1233h24M792 1422h24M792 1611h24" stroke="#007000" strokeWidth="4" strokeDasharray="7 2 4 3" />
    <text x="423" y="64" textAnchor="middle" fontSize="15" fontFamily="Liberation Sans" fill="#00b400">top_block:1</text>
    <text x="423" y="1778" textAnchor="middle" fontSize="15" fontFamily="Liberation Sans" fill="#00b400">top_block</text>
  </svg>
);

/* ---------- tree ---------- */

/* guide kinds: t = tee, l = last, v = pass-through, b = blank, + / - = expander */
const Guide = ({ kind, end }) => {
  const box = kind === "+" || kind === "-";
  const down = kind === "l" || end ? 10 : 20;
  if (kind === "b") return <svg width="25" height="20" />;
  return (
    <svg width="25" height="20" viewBox="0 0 25 20" fill="none">
      <path d={`M12.500 0V${down}`} stroke="#8c8c8c" strokeDasharray="1 1" />
      {kind !== "v" && <path d="M13 10.500h12" stroke="#8c8c8c" strokeDasharray="1 1" />}
      {box && <rect x="7.500" y="5.500" width="10" height="10" rx="1" fill="#fbfbfb" stroke="#8f8f8f" />}
      {box && <path d={kind === "+" ? "M9.500 10.500h6M12.500 7.500v6" : "M9.500 10.500h6"} stroke="#3355a5" />}
    </svg>
  );
};
const HIER = [
  ["t", 30, ["folder"], "Router"],
  ["-", 30, ["chip"], "xc6slx4-3tqg144", false, true],
  ["b-", 51, ["vfileSel", "tree3"], "top_block (top_block.v", true, true],
  ["bbt", 30, ["vfile"], "a1 - fsm (fsm.v)"],
  ["bbt", 30, ["vfile"], "a2 - sync (sync.v)"],
  ["bbt", 30, ["vfile"], "a3 - register (register.v"],
  ["bbt", 30, ["vfile"], "f1 - fifo (fifo.v)"],
  ["bbt", 30, ["vfile"], "f2 - fifo (fifo.v)"],
  ["bbl", 30, ["vfile"], "f3 - fifo (fifo.v)"],
];
const PROC = [
  ["t", 50, ["sigma"], "Design Summary/Reports"],
  ["+", 50, ["tools"], "Design Utilities"],
  ["+", 50, ["tools"], "User Constraints"],
  ["-", 50, ["cycle", "warn"], "Synthesize - XST"],
  ["vt", 51, ["schem"], "View RTL Schematic"],
  ["vt", 51, ["schemSel"], "View Technology Sc...", true],
  ["vt", 51, ["cycle"], "Check Syntax"],
  ["vl", 51, ["cycle"], "Generate Post-Synt..."],
  ["+", 50, ["cycle"], "Implement Design"],
  ["t", 50, ["cycle"], "Generate Programming ..."],
  ["+", 50, ["device"], "Configure Target Device"],
  ["l", 50, ["analyze"], "Analyze Design Using C..."],
];
const Tree = ({ rows }) => rows.map(([g, w, icons, text, sel, end]) => (
  <Row key={text}>
    {[...g].map((k, i) => <Guide key={i} kind={k} end={end} />)}
    <RowBody $sel={sel}>
      <IconSlot $w={w}>{icons.map((n) => <React.Fragment key={n}>{ICONS[n]}</React.Fragment>)}</IconSlot>
      <RowText>{text}</RowText>
    </RowBody>
  </Row>
));

const Tools = ({ as: T, Rule, items, on }) => items.map((n, i) =>
  n === "|" ? <Rule key={i} /> : <T key={i} aria-label={n} $on={n === on}>{ICONS[n]}</T>
);
const CaptionButtons = () => Object.keys(CAPS).map((n) => <CapButton key={n} aria-label={n}>{CAPS[n]}</CapButton>);
const Tri = ({ d, c = "#a0a0a0" }) => (
  <Svg s={12} vb="0 0 12 12"><path d={{ up: "M0 8L6 1l6 7z", down: "M0 1h12L6 8z", left: "M9 0v12L3 6z", right: "M3 0v12l7-6z" }[d]} fill={c} /></Svg>
);

const TOP = [
  ["newf", "open", "save", "saveall", "|", "print"],
  ["cut", "copy", "paste", "del", "|", "undo", "redo", "|", "more"],
  ["zin", "zout", "zfit", "zbox", "zsel", "refresh", "|", "hammer"],
  ["cascade", "tileh", "tilev", "windows"],
  ["wrench", "help"],
  ["run", "sigma", "scope"],
  ["bulb"],
];
const FILES = [["sigma", "Design Summary (Implemented)"], ["doc", "router_top_tb.v"], ["doc", "top_block_tb.v"], ["doc", "fsm_tb.v"], ["schem", "top_block (RTL1)"]];

/* ---------- taskbar drawings ---------- */
const APPS = [
  ["Task view", <Svg s={22} vb="0 0 22 22"><path d="M2 1v4h12V1M2 21v-4h12v4M2 8h12v6H2zM19 1v5M19 13v8" stroke="#fff" strokeWidth="1.500" /><path d="M17.500 8h3v3.500h-3z" fill="#fff" /></Svg>],
  ["Copilot", <Svg s={30} vb="0 0 30 30"><path d="M9 1h9c2 0 3 1 4 4l1 4h-5c-3 0-4 1-5 4l-2 7c-1 2-2 3-4 3H5c-3 0-4-2-3-6L6 4c1-2 2-3 3-3z" fill="url(#cpa)" /><path d="M21 29h-9c-2 0-3-1-4-4l-1-3h5c3 0 4-2 5-5l2-6c1-2 2-3 4-3h2c3 0 4 2 3 6l-4 12c-1 2-2 3-3 3z" fill="url(#cpb)" /><defs><linearGradient id="cpa" x1="0" y1="0" x2="0" y2="1"><stop stopColor="#1e8fe8" /><stop offset=".5" stopColor="#1a9fb8" /><stop offset="1" stopColor="#f2d337" /></linearGradient><linearGradient id="cpb" x1="0" y1="0" x2="0" y2="1"><stop stopColor="#b05cf0" /><stop offset=".5" stopColor="#f25f8e" /><stop offset="1" stopColor="#fb9a4b" /></linearGradient></defs></Svg>],
  ["Edge", <Svg s={32} vb="0 0 32 32"><defs><linearGradient id="ed" x1="0" y1="0" x2="1" y2=".4"><stop stopColor="#1d9be8" /><stop offset="1" stopColor="#62e062" /></linearGradient></defs><path d="M1 17C1 6 9 0 17 0c9 0 14 6 14 12 0 5-3 8-8 8-3 0-4-1-4-2s1-2 1-4c0-3-3-5-7-5-6 0-11 3-12 8z" fill="url(#ed)" /><path d="M1 16c1-5 6-8 11-7-4 3-5 7-3 12 2 6 9 10 15 7 2-1 3-2 4-3-2 4-7 7-12 7C7 32 0 25 1 16z" fill="#0c7bd4" /><path d="M12 13c-3 5-1 11 4 13s9 1 12-1c-3 4-8 7-12 7-8-3-10-14-4-19z" fill="#124f96" /></Svg>],
  ["File Explorer", <Svg w={30} h={28} vb="0 0 30 28"><path d="M1 1h10l3 3h15v23H1z" fill="#e09c17" /><path d="M1 6h28v21H1z" fill="#ffd667" /><path d="M6 27V15h18v12h-5v-7h-8v7z" fill="#3f97dc" /></Svg>],
  ["Outlook", <Svg s={32} vb="0 0 32 32"><path d="M8 10L19 1l12 8v20c0 2-1 2-2 2H9z" fill="#1066b5" /><path d="M19 1l12 8-12 10L9 12z" fill="#1b8fe0" /><path d="M31 12v17c0 2-1 2-3 2H9z" fill="#45c8f5" /><rect x="1" y="9" width="15" height="15" rx="2" fill="#0f6cc9" /><ellipse cx="8.500" cy="16.500" rx="3.500" ry="4.300" stroke="#fff" strokeWidth="2.200" /></Svg>],
  ["MobaXterm", <Svg s={32} vb="0 0 32 32"><path d="M1.500 1.500h27v25h-27z" fill="#2a2f33" stroke="#b9c3c9" strokeWidth="2" /><path d="M4 5l4 3-4 3M9 11h4" stroke="#fff" strokeWidth="1.600" /><path d="M10 20l6-5 7 8-4 6z" fill="#f14b3c" /><path d="M16 15l9-6 5 6-7 8z" fill="#4e8ff5" /><path d="M20 23l6-4 5 3-8 10-4-4z" fill="#a4e015" /></Svg>],
  ["Chrome", <Svg s={32} vb="0 0 32 32"><circle cx="16" cy="16" r="15.500" fill="#fbc116" /><path d="M2.500 8.300A15.500 15.500 0 0 0 15 31.500L22 20z" fill="#2ba24c" /><path d="M3 7.500A15.500 15.500 0 0 1 29.500 8.500H16L9.500 19z" fill="#e33b2e" /><circle cx="16" cy="16" r="7.500" fill="#fff" /><circle cx="16" cy="16" r="6" fill="#2f7de9" /></Svg>, "run"],
  ["ISE", <Svg s={30} vb="0 0 32 32"><path d="M1 1h17l13 15H14z" fill="#dde05a" /><path d="M14 16h17L18 31H1z" fill="#8c8f0a" /></Svg>, "on"],
];
const Ribbon = () => (
  <svg width="76" height="46" viewBox="0 0 76 46" fill="none">
    <path d="M13 1c-6 2-8 8-5 15l11 28 7-3L13 13c-1-4 3-6 6-3z" fill="#6ed321" />
    <path d="M13 1c8-2 14 6 9 16L9 45 1 42l13-24c3-5 2-11-1-13z" fill="#3da81c" />
    <circle cx="46" cy="21" r="16.500" fill="#7fb2f2" />
    <path d="M36 9c5-4 12-4 15 0l-5 5-6 3-6-1zM38 20c6-3 13 0 17 3-1 5-5 7-7 12-6-3-4-9-9-9zM55 9l6 6 0 6-6-5z" fill="#2f9a26" />
    <path d="M22 34c8 10 24 7 35 1 6-3 12-1 17-4l-2 8c-6-1-8 1-14 4-14 5-32 3-39-5z" fill="#55c51f" />
  </svg>
);

export default function App() {
  return (
    <Frame>
      <GlobalStyle />
      <TitleBar>
        {ICONS.ise}<span>ISE Project Navigator (P.20131013) - D:\Router\Sim\Router\Router.xise - [top_block (RTL1)]</span>
        <Spacer />
        <WinButtons>
          <WinButton aria-label="Minimize"><Svg s={12} vb="0 0 12 12"><path d="M0 6.500h12" stroke="#111" /></Svg></WinButton>
          <WinButton aria-label="Restore"><Svg s={13} vb="0 0 13 13"><path d="M.5 3.500h9v9h-9zM3.500 3V.5h9v9H10" stroke="#111" /></Svg></WinButton>
          <WinButton aria-label="Close"><Svg s={13} vb="0 0 13 13"><path d="M1 1l11 11M12 1L1 12" stroke="#111" strokeWidth="1.200" /></Svg></WinButton>
        </WinButtons>
      </TitleBar>
      <MenuBar>
        {ICONS.schem}
        {["File", "Edit", "View", "Project", "Source", "Process", "Tools", "Window", "Layout", "Help"].map((m) => (
          <MenuButton key={m} $plain={m === "Layout"}>{m === "Layout" ? <>La<u>y</u>out</> : m}</MenuButton>
        ))}
        <Spacer />
        <MdiButton aria-label="Minimize document"><Svg s={12} vb="0 0 12 12"><path d="M2 9.500h7" stroke="#456" strokeWidth="2" /></Svg></MdiButton>
        <MdiButton aria-label="Restore document"><Svg s={12} vb="0 0 12 12"><path d="M1 5h6v5H1zM4 5V2h6v5H7" stroke="#456" strokeWidth="1.300" /></Svg></MdiButton>
        <MdiButton aria-label="Close document"><Svg s={12} vb="0 0 12 12"><path d="M2 2l8 8M10 2l-8 8" stroke="#456" strokeWidth="1.800" /></Svg></MdiButton>
      </MenuBar>
      <ToolBar>
        {TOP.map((g, i) => (
          <ToolGroup key={i}>
            <Grip />
            {g.map((n, j) => n === "|" ? <VRule key={j} /> : n === "more" ? <More key={j}>»</More> : <TopTool key={j} aria-label={n} $on={n === "hammer"}>{ICONS[n]}</TopTool>)}
          </ToolGroup>
        ))}
      </ToolBar>

      <Workspace>
        <DockPanel>
          <Caption $size={12} $m="2px 0 3px">Design<Spacer /><CaptionButtons /></Caption>
          <Dock>
            <SideBar $pad="0">
              <Tools as={SideTool} Rule={HRule} items={["newsrc", "addsrc", "addcopy", "|", "hier", "|", "remove", "|", "chipcheck", "filecheck", "|", "tilev"]} />
            </SideBar>
            <DockBody>
              <ViewRow>
                <ViewLabel>View:</ViewLabel>
                <Choice $w={120}><Radio type="radio" name="view" defaultChecked />{ICONS.chipblue}Implementat</Choice>
                <Choice $w={90}><Radio type="radio" name="view" />{ICONS.isim}Simulat</Choice>
              </ViewRow>
              <TreeBox>
                <TreeHead>Hierarchy</TreeHead>
                <Tree rows={HIER} />
                <ScrollRow>
                  <ScrollArrow $w={21} aria-label="Scroll left"><Svg s={12} vb="0 0 12 12"><path d="M8 1.500L3.500 6 8 10.500" stroke="#444" strokeWidth="2" /></Svg></ScrollArrow>
                  <Track><Thumb /></Track>
                  <ScrollArrow $w={29} aria-label="Scroll right"><Svg s={12} vb="0 0 12 12"><path d="M4 1.500L8.500 6 4 10.500" stroke="#444" strokeWidth="2" /></Svg></ScrollArrow>
                </ScrollRow>
              </TreeBox>
            </DockBody>
          </Dock>
          <DotsH $w="90px" />
          <Dock>
            <SideBar $pad="2px 0 0">
              <Tools as={SideTool} Rule={HRule} items={["run", "|", "flowblue", "flowx", "|", "flowchk", "|", "tilev"]} />
            </SideBar>
            <DockBody>
              <Running>{ICONS.cycle}No Processes Running</Running>
              <TreeBox>
                <TreeHead>Processes: top_block</TreeHead>
                <Tree rows={PROC} />
              </TreeBox>
            </DockBody>
          </Dock>
          <DockTabs>
            <DockTab $w={74}>{ICONS.ise}Start</DockTab>
            <DockTab $w={94} $on>{ICONS.design}Design</DockTab>
            <DockTab $w={75}>{ICONS.files}Files</DockTab>
            <TabArrow $off aria-label="Previous tabs"><Tri d="left" /></TabArrow>
            <TabArrow aria-label="Next tabs"><Tri d="right" c="#000" /></TabArrow>
          </DockTabs>
        </DockPanel>
        <DotsV $w="6px" $h="222px" />
        <EditorArea>
          <EditorRow>
            <ToolColumn>
              <Tools as={SideTool} Rule={HRule} on="pan" items={["pointer", "pan", "|", "stars", "|", "coneR", "coneL", "|", "push", "pop", "mod1", "modx", "|", "modtri", "label", "|", "up", "back", "fwd", "hist", "|", "twobox", "pin"]} />
            </ToolColumn>
            <Canvas><Schematic /></Canvas>
          </EditorRow>
          <EditorTabs>
            {FILES.map(([icon, name], i) => (
              <EditorTab key={name} $on={i === 4}>
                {ICONS[icon]}<TabName>{name}</TabName>
                <TabClose $on={i === 4} aria-label={`Close ${name}`}><Svg s={10} vb="0 0 10 10"><path d="M2 1.500l6 7M8 1.500l-6 7" stroke="#fff" strokeWidth="2" /></Svg></TabClose>
              </EditorTab>
            ))}
          </EditorTabs>
        </EditorArea>
      </Workspace>

      <DotsH $w="636px" />
      <Caption $size={13}>View by Category<Spacer /><CaptionButtons /></Caption>
      <CategoryPanel>
        <Half>
          <HalfTitle>Design Objects of Top Level Block</HalfTitle>
          <Lists>
            {["Instances", "Pins", "Signals"].map((n) => (
              <ListTable key={n}><thead><tr><HeadCell>{n}<Tri d="up" /></HeadCell></tr></thead></ListTable>
            ))}
          </Lists>
        </Half>
        <DotsV $w="16px" $h="42px" />
        <Half>
          <HalfTitle>Properties: (No Selection)</HalfTitle>
          <ListTable><thead><tr><HeadCell>Name<Tri d="down" /></HeadCell><HeadCell>Value</HeadCell></tr></thead></ListTable>
        </Half>
      </CategoryPanel>
      <BottomTabs>
        <DockTab $w={101}>{ICONS.warn}Warnings</DockTab>
        <DockTab $w={156} $on>{ICONS.grid}View by Category</DockTab>
      </BottomTabs>
      <ConsoleBar>
        <ConsoleTab>{ICONS.console}Console</ConsoleTab>
        <ConsoleTab>{ICONS.error}Errors</ConsoleTab>
      </ConsoleBar>
      <StatusBar>[5220,4916]</StatusBar>

      <TaskBar>
        <StartButton aria-label="Start"><Svg s={22} vb="0 0 22 22"><path d="M0 3l9.500-1.300v8.800H0zM10.500 1.500L22 0v10.500H10.500zM0 11.500h9.500v8.800L0 19zM10.500 11.500H22V22l-11.500-1.500z" fill="#fff" /></Svg></StartButton>
        <Search>
          <Svg s={22} vb="0 0 22 22"><circle cx="13.500" cy="8" r="6.500" stroke="#eee" strokeWidth="1.500" /><path d="M9 12.500L1 21" stroke="#eee" strokeWidth="1.600" /></Svg>
          <SearchInput placeholder="Type here to search" />
          <Ribbon />
        </Search>
        {APPS.map(([name, icon, st]) => <AppButton key={name} aria-label={name} $run={!!st} $on={st === "on"}>{icon}</AppButton>)}
        <Spacer />
        <Tray>
          <Weather>
            <Svg s={30} vb="0 0 30 30"><circle cx="13" cy="13" r="12" fill="#f79a1e" /><path d="M8 26c-6 0-6-7-1-8 1-6 9-7 11-2 8-1 11 4 10 7s-2 3-5 3z" fill="#bcd3f7" /><path d="M20 22l3 4c1 5-6 5-6 1z" fill="#1f78f0" /></Svg>
            <span>{"27°C  Light rain"}</span>
          </Weather>
          <TrayButton aria-label="Show hidden icons"><Svg s={16} vb="0 0 16 16"><path d="M1 12l7-7.500 7 7.500" stroke="#fff" strokeWidth="1.500" /></Svg></TrayButton>
          <TrayButton aria-label="Meet now"><Svg s={18} vb="0 0 18 18"><rect x="3" y="5" width="9" height="9" rx="1.500" stroke="#fff" strokeWidth="1.300" /><path d="M12 8l3-1.500v6L12 11M4 2.500c2-2 7-2 9 0M4 16.500c2 1.500 7 1.500 9 0" stroke="#fff" strokeWidth="1.200" /></Svg></TrayButton>
          <TrayButton aria-label="Battery"><Svg s={20} vb="0 0 20 20"><path d="M1.500 5h16v10h-16zM18.500 8v4" stroke="#fff" strokeWidth="1.500" /><path d="M3.500 7H11v6H3.500z" fill="#fff" /></Svg></TrayButton>
          <TrayButton aria-label="Network"><Svg s={18} vb="0 0 18 18"><path d="M2 16C2 8 8 3 16 2.500M5.500 16.500c0-6 4.500-10 10.500-10M9 16.800c0-4 3-6.500 7-6.500" stroke="#ddd" strokeWidth="1.300" /><path d="M12 16.500c0-2 2-3 4-3v3z" fill="#fff" /></Svg></TrayButton>
          <TrayButton aria-label="Volume"><Svg s={20} vb="0 0 20 20"><path d="M1 7.500h3L8.500 3v14L4 12.500H1zM11 7.500c1.500 1.500 1.500 3.500 0 5M13.500 5c3 3 3 7 0 10M16 3c4 4 4 10 0 14" stroke="#fff" strokeWidth="1.200" /></Svg></TrayButton>
          <TrayText $w={46}>ENG<br />IN</TrayText>
          <TrayText $w={84}>5:11 PM<br />10/10/2024</TrayText>
          <NoticeButton aria-label="Notifications"><Svg s={22} vb="0 0 22 22"><path d="M1 1h20v16h-9l-4 4v-4H1z" fill="#fff" /><path d="M5 5.500h12M5 9h12M5 12.500h7" stroke="#2e2427" strokeWidth="1.400" /><path d="M16 12c0 4 2 5 5 4-1 5-8 5-8 1 0-2 1-4 3-5z" fill="#fff" stroke="#2e2427" /></Svg></NoticeButton>
          <Desktop aria-label="Show desktop" />
        </Tray>
      </TaskBar>
    </Frame>
  );
}
